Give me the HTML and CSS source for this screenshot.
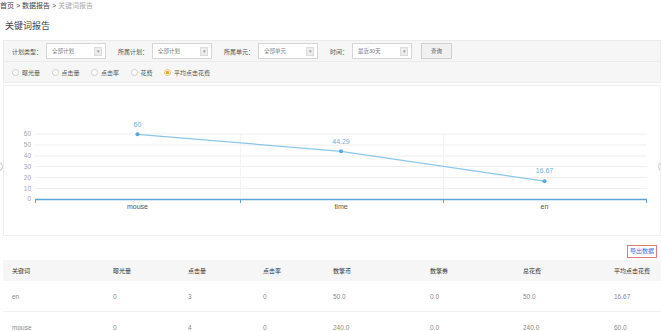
FILE: index.html
```html
<!DOCTYPE html>
<html>
<head>
<meta charset="utf-8">
<title>关键词报告</title>
<link rel="stylesheet" href="styles.css">
</head>

<body>
<div class="crumb"><a>首页</a> &gt; <a>数据报告</a> &gt; <span>关键词报告</span></div>
<h2 class="page_tit">关键词报告</h2>

<div class="wrap">
	<div class="filter">
		<div class="filter_row">
			<label>计划类型：</label>
			<div class="sel"><span>全部计划</span><i>▾</i></div>
			<label>所属计划：</label>
			<div class="sel"><span>全部计划</span><i>▾</i></div>
			<label>所属单元：</label>
			<div class="sel"><span>全部单元</span><i>▾</i></div>
			<label class="short">时间：</label>
			<div class="sel"><span>最近30天</span><i>▾</i></div>
			<a class="btn">查询</a>
		</div>
		<div class="filter_row radio_row">
			<span class="radio"><i></i>曝光量</span>
			<span class="radio"><i></i>点击量</span>
			<span class="radio"><i></i>点击率</span>
			<span class="radio"><i></i>花费</span>
			<span class="radio on"><i></i>平均点击花费</span>
		</div>
	</div>

	<div class="chart_box">
		<svg width="656" height="149" viewBox="4 84 656 149">
			<g stroke="#eeeeee" stroke-width="1">
				<line x1="35" y1="132" x2="647" y2="132" />
				<line x1="35" y1="143" x2="647" y2="143" />
				<line x1="35" y1="154" x2="647" y2="154" />
				<line x1="35" y1="164.5" x2="647" y2="164.5" />
				<line x1="35" y1="175.5" x2="647" y2="175.5" />
				<line x1="35" y1="186.5" x2="647" y2="186.5" />
			</g>
			<g stroke="#f4f4f4" stroke-width="1">
				<line x1="240.5" y1="132" x2="240.5" y2="197" />
				<line x1="443.5" y1="132" x2="443.5" y2="197" />
			</g>
			<g class="y_lab" text-anchor="end">
				<text x="31" y="134">60</text>
				<text x="31" y="145">50</text>
				<text x="31" y="156">40</text>
				<text x="31" y="166.5">30</text>
				<text x="31" y="177.5">20</text>
				<text x="31" y="188.5">10</text>
				<text x="31" y="199">0</text>
			</g>
			<line x1="35" y1="197.5" x2="647" y2="197.5" stroke="#5ba6d6" stroke-width="1.5" />
			<g stroke="#5ba6d6" stroke-width="1">
				<line x1="35.5" y1="197" x2="35.5" y2="201" />
				<line x1="240.5" y1="197" x2="240.5" y2="201" />
				<line x1="443.5" y1="197" x2="443.5" y2="201" />
				<line x1="646.5" y1="197" x2="646.5" y2="201" />
			</g>
			<g class="x_lab" text-anchor="middle">
				<text x="137.5" y="206.5">mouse</text>
				<text x="341" y="206.5">time</text>
				<text x="544.5" y="206.5">en</text>
			</g>
			<polyline points="137.5,132.3 341,149.3 544.5,179.2" fill="none" stroke="#8cc7ea" stroke-width="1.3" />
			<g fill="#5aa8d8">
				<circle cx="137.5" cy="132.3" r="2" />
				<circle cx="341" cy="149.3" r="2" />
				<circle cx="544.5" cy="179.2" r="2" />
			</g>
			<g class="v_lab" text-anchor="middle">
				<text x="137.5" y="124.5">60</text>
				<text x="341" y="142">44.29</text>
				<text x="544.5" y="171">16.67</text>
			</g>
		</svg>
	</div>

	<div class="export"><a>导出数据</a></div>

	<table class="data_tb">
		<thead>
			<tr><th class="c1">关键词</th><th class="c2">曝光量</th><th class="c3">点击量</th><th class="c4">点击率</th><th class="c5">数擎币</th><th class="c6">数擎券</th><th class="c7">总花费</th><th class="c8">平均点击花费</th></tr>
		</thead>
		<tbody>
			<tr><td>en</td><td>0</td><td>3</td><td>0</td><td>50.0</td><td>0.0</td><td>50.0</td><td>16.67</td></tr>
			<tr><td>mouse</td><td>0</td><td>4</td><td>0</td><td>240.0</td><td>0.0</td><td>240.0</td><td>60.0</td></tr>
		</tbody>
	</table>
</div>

<span class="edge edge_l"></span>
<span class="edge edge_r"></span>
</body>
</html>
```

FILE: styles.css
```css
html,body {margin: 0;padding: 0;overflow: hidden;}
body {position: relative;font-family: "Liberation Sans", "Noto Sans CJK SC", sans-serif;color: #555;background: #fff;}
h2,label {margin: 0;padding: 0;font-weight: normal;}
a {text-decoration: none;cursor: pointer;}

.crumb {height: 11px;line-height: 11px;font-size: 7px;color: #444;}
.crumb a {color: #444;}
.crumb span {color: #aaa;}
.page_tit {padding: 10px 0 0 5px;height: 11px;line-height: 11px;font-size: 9px;color: #444;margin-bottom: 8px;}

.wrap {width: 658px;margin-left: 3px;}

.filter {background: #f6f6f6;border: 1px solid #ebebeb;}
.filter_row {display: flex;align-items: center;height: 20px;padding-left: 8px;}
.filter_row label {width: 30px;font-size: 6px;color: #555;white-space: nowrap;}
.filter_row label.short {width: 18px;}
.filter_row .sel {display: flex;align-items: center;justify-content: space-between;width: 50px;height: 14px;margin: 0 12px 0 4px;padding: 0 3px 0 5px;background: #fff;border: 1px solid #d6d6d6;font-size: 5.5px;color: #777;}
.sel i {display: block;width: 6px;height: 7px;line-height: 7px;text-align: center;font-style: normal;font-size: 5px;color: #999;background: #ececec;border: 1px solid #dcdcdc;}
.btn {display: block;width: 29px;height: 14px;line-height: 14px;margin-left: -3px;text-align: center;font-size: 5.5px;color: #555;background: #f1f1f1;border: 1px solid #cfcfcf;}

.radio_row {border-top: 1px solid #ebebeb;}
.radio {display: flex;align-items: center;margin-right: 11.5px;font-size: 6px;color: #555;}
.radio i {display: block;width: 5px;height: 5px;margin-right: 3px;border: 1px solid #cfcfcf;border-radius: 50%;background: #fff;}
.radio.on i {border-color: #f7c46c;background: radial-gradient(circle, #f5a623 0, #f5a623 1.3px, #fff1d2 1.8px);}

.chart_box {height: 149px;margin-top: 2px;border: 1px solid #efefef;background: #fff;}
.chart_box svg {display: block;}
.y_lab text {font-size: 6.5px;fill: #a5a5a5;}
.x_lab text {font-size: 7px;fill: #555;}
.v_lab text {font-size: 7px;fill: #6ab0dc;}

.export {display: flex;justify-content: flex-end;padding: 9px 4px 2px 0;}
.export a {display: block;height: 11px;line-height: 11px;padding: 0 2px;font-size: 6px;color: #3b6fd6;border: 1px solid #e07b7b;}

.data_tb {width: 658px;border-collapse: collapse;table-layout: fixed;}
.data_tb th,
.data_tb td {padding: 0 0 0 9px;text-align: left;font-size: 6px;white-space: nowrap;}
.data_tb th {height: 21px;background: #f6f6f6;color: #333;font-weight: normal;}
.data_tb td {height: 30px;font-size: 6.5px;color: #888;border-bottom: 1px solid #f0f0f0;}
.data_tb .c1 {width: 92px;}
.data_tb .c2 {width: 66px;}
.data_tb .c3 {width: 66px;}
.data_tb .c4 {width: 61px;}
.data_tb .c5 {width: 88px;}
.data_tb .c6 {width: 84px;}
.data_tb .c7 {width: 82px;}

/* half-hidden round handles at the page edges */
.edge {position: absolute;top: 162px;width: 7px;height: 7px;border: 1px solid #c8c8c8;border-radius: 50%;}
.edge_l {left: -6px;}
.edge_r {right: -6px;}
```
